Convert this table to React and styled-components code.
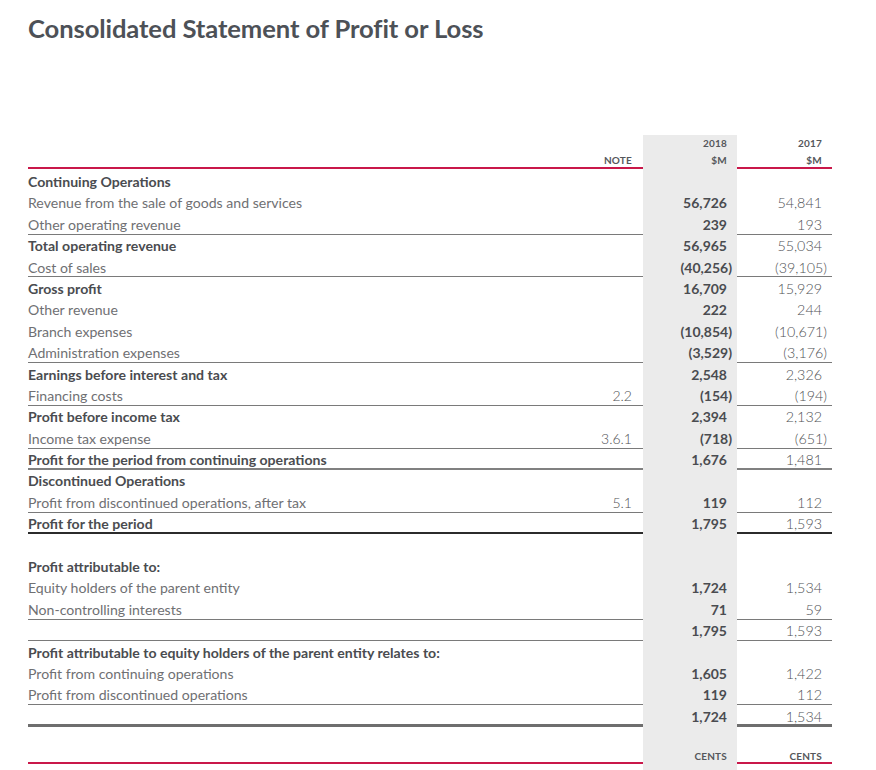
import React from "react";
import styled, { createGlobalStyle } from "styled-components";

const GlobalStyle = createGlobalStyle`
  html, body { margin: 0; padding: 0; background: #ffffff; }
  body { font-family: Lato, "Open Sans", "Liberation Sans", sans-serif; }
`;

const CRIMSON = "#c9184a";
const SHADE = "#ebebeb";

const Page = styled.div`
  padding: 0 0 0 28px;
  width: 804px;
`;

const Title = styled.h1`
  margin: 13px 0 0 0;
  font-size: 25.6px;
  line-height: 30px;
  font-weight: 700;
  color: #4d5157;
  letter-spacing: -0.1px;
`;

const Table = styled.div`
  margin-top: 92px;
  display: flex;
  flex-direction: column;
`;

const lineStyles = {
  none: "border-bottom: 0;",
  thin: "border-bottom: 1px solid #7a7a7a;",
  mid: "border-bottom: 2px solid #808080;",
  heavy: "border-bottom: 2px solid #2b2b2b;",
  thick: "border-bottom: 3px solid #6e6e6e;",
  accent: `border-bottom: 2px solid ${CRIMSON};`,
};

const Row = styled.div`
  display: grid;
  grid-template-columns: 1fr 83px 94px 95px;
  box-sizing: border-box;
  height: ${(p) => p.$h}px;
  ${(p) => lineStyles[p.$line || "none"]}
`;

const Label = styled.div`
  font-size: 14.1px;
  line-height: 21px;
  white-space: nowrap;
  color: ${(p) => (p.$bold ? "#4a4c50" : "#6f7073")};
  font-weight: ${(p) => (p.$bold ? 700 : 400)};
  padding-top: 0.5px;
`;

const NoteCell = styled.div`
  text-align: right;
  padding-right: 11px;
  font-size: 14px;
  line-height: 21px;
  font-weight: 300;
  color: #505255;
  padding-top: 0.5px;
`;

const CurCell = styled.div`
  background: ${SHADE};
  text-align: right;
  padding-right: 10px;
  font-size: 14px;
  line-height: 21px;
  font-weight: 700;
  color: #4a4c50;
  padding-top: 0.5px;
  white-space: nowrap;
`;

const PrevCell = styled.div`
  text-align: right;
  padding-right: 10px;
  font-size: 14.3px;
  line-height: 21px;
  font-weight: 300;
  color: #505255;
  padding-top: 0.5px;
  white-space: nowrap;
`;

const Paren = styled.span`
  margin-right: -5px;
`;

const HeadCell = styled.div`
  text-align: right;
  padding-right: ${(p) => p.$pr}px;
  background: ${(p) => (p.$shade ? SHADE : "transparent")};
  font-size: 10px;
  line-height: 17px;
  font-weight: 700;
  color: #55575b;
  letter-spacing: 0.2px;
  display: flex;
  flex-direction: column;
  justify-content: flex-end;
`;

const Spacer = styled.div`
  height: 1.5px;
  display: grid;
  grid-template-columns: 1fr 83px 94px 95px;
`;

const ShadeFill = styled.div`
  grid-column: 3;
  background: ${SHADE};
`;

const Tail = styled.div`
  display: grid;
  grid-template-columns: 1fr 83px 94px 95px;
  height: 20px;
`;

const rows = [
  { label: "Continuing Operations", bold: true },
  { label: "Revenue from the sale of goods and services", a: "56,726", b: "54,841" },
  { label: "Other operating revenue", a: "239", b: "193", line: "thin" },
  { label: "Total operating revenue", bold: true, a: "56,965", b: "55,034" },
  { label: "Cost of sales", a: "(40,256)", b: "(39,105)", line: "thin" },
  { label: "Gross profit", bold: true, a: "16,709", b: "15,929" },
  { label: "Other revenue", a: "222", b: "244" },
  { label: "Branch expenses", a: "(10,854)", b: "(10,671)" },
  { label: "Administration expenses", a: "(3,529)", b: "(3,176)", line: "thin" },
  { label: "Earnings before interest and tax", bold: true, a: "2,548", b: "2,326" },
  { label: "Financing costs", note: "2.2", a: "(154)", b: "(194)", line: "thin" },
  { label: "Profit before income tax", bold: true, a: "2,394", b: "2,132" },
  { label: "Income tax expense", note: "3.6.1", a: "(718)", b: "(651)", line: "thin" },
  { label: "Profit for the period from continuing operations", bold: true, a: "1,676", b: "1,481", line: "mid" },
  { label: "Discontinued Operations", bold: true },
  { label: "Profit from discontinued operations, after tax", note: "5.1", a: "119", b: "112", line: "thin" },
  { label: "Profit for the period", bold: true, a: "1,795", b: "1,593", line: "heavy" },
  { label: "" },
  { label: "Profit attributable to:", bold: true },
  { label: "Equity holders of the parent entity", a: "1,724", b: "1,534" },
  { label: "Non-controlling interests", a: "71", b: "59", line: "thin" },
  { label: "", a: "1,795", b: "1,593", line: "thin" },
  { label: "Profit attributable to equity holders of the parent entity relates to:", bold: true },
  { label: "Profit from continuing operations", a: "1,605", b: "1,422" },
  { label: "Profit from discontinued operations", a: "119", b: "112", line: "thin" },
  { label: "", a: "1,724", b: "1,534", line: "thick" },
  { label: "" },
];

function Amount({ value }) {
  if (!value) return null;
  if (value.endsWith(")")) {
    return (
      <>
        {value.slice(0, -1)}
        <Paren>)</Paren>
      </>
    );
  }
  return value;
}

export default function App() {
  return (
    <>
      <GlobalStyle />
      <Page>
        <Title>Consolidated Statement of Profit or Loss</Title>
        <Table>
          <Row $h={34} $line="accent">
            <div />
            <HeadCell $pr={11}>NOTE</HeadCell>
            <HeadCell $pr={10} $shade>
              <span>2018</span>
              <span>$M</span>
            </HeadCell>
            <HeadCell $pr={10}>
              <span>2017</span>
              <span>$M</span>
            </HeadCell>
          </Row>
          <Spacer>
            <ShadeFill />
          </Spacer>
          {rows.map((r, i) => (
            <Row key={i} $h={21.4} $line={r.line}>
              <Label $bold={r.bold}>{r.label}</Label>
              <NoteCell>{r.note || ""}</NoteCell>
              <CurCell>
                <Amount value={r.a} />
              </CurCell>
              <PrevCell>
                <Amount value={r.b} />
              </PrevCell>
            </Row>
          ))}
          <Row $h={16} $line="accent">
            <div />
            <HeadCell $pr={11} />
            <HeadCell $pr={10} $shade>CENTS</HeadCell>
            <HeadCell $pr={10}>CENTS</HeadCell>
          </Row>
          <Tail>
            <ShadeFill />
          </Tail>
        </Table>
      </Page>
    </>
  );
}
